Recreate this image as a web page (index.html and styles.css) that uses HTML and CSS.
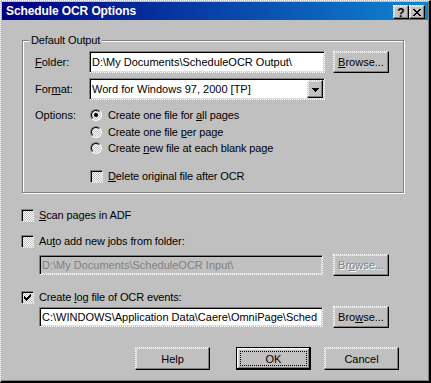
FILE: index.html
```html
<!DOCTYPE html>
<html>
<head>
<meta charset="utf-8">
<link rel="stylesheet" href="styles.css">
</head>
<body>
<div class="window">
  <div class="titlebar">
    <span class="title">Schedule OCR Options</span>
    <div class="tbtns">
      <div class="tbtn help">?</div>
      <div class="tbtn close">
        <svg width="8" height="7" viewBox="0 0 8 7" shape-rendering="crispEdges"><path fill="#000" d="M0 0h2v1h-2z M6 0h2v1h-2z M1 1h2v1h-2z M5 1h2v1h-2z M2 2h4v1h-4z M3 3h2v1h-2z M2 4h4v1h-4z M1 5h2v1h-2z M5 5h2v1h-2z M0 6h2v1h-2z M6 6h2v1h-2z"/></svg>
      </div>
    </div>
  </div>
  <div class="content">
    <div class="group">
      <span class="legend">Default Output</span>
      <div class="row">
        <span class="lbl"><u>F</u>older:</span>
        <div class="field wide">D:\My Documents\ScheduleOCR Output\</div>
        <div class="btn browse"><span><u>B</u>rowse...</span></div>
      </div>
      <div class="row row-gap">
        <span class="lbl">For<u>m</u>at:</span>
        <div class="field wide select">
          <span class="sel-text">Word for Windows 97, 2000 [TP]</span>
          <div class="arrow">
            <svg width="7" height="4" viewBox="0 0 7 4" shape-rendering="crispEdges"><path fill="#000" d="M0 0h7v1h-7z M1 1h5v1h-5z M2 2h3v1h-3z M3 3h1v1h-1z"/></svg>
          </div>
        </div>
      </div>
      <div class="options">
        <span class="lbl opt-lbl">Options:</span>
        <div class="radios">
          <div class="radio-row"><span class="radio"><span class="radio-in"><span class="dot"></span></span></span><span class="txt">Create one file for <u>a</u>ll pages</span></div>
          <div class="radio-row mid"><span class="radio"><span class="radio-in"></span></span><span class="txt">Create one file <u>p</u>er page</span></div>
          <div class="radio-row"><span class="radio"><span class="radio-in"></span></span><span class="txt">Create <u>n</u>ew file at each blank page</span></div>
        </div>
      </div>
      <div class="check-row indent">
        <span class="checkbox"></span><span class="txt"><u>D</u>elete original file after OCR</span>
      </div>
    </div>

    <div class="check-row scan">
      <span class="checkbox"></span><span class="txt"><u>S</u>can pages in ADF</span>
    </div>
    <div class="check-row auto">
      <span class="checkbox"></span><span class="txt">Au<u>t</u>o add new jobs from folder:</span>
    </div>
    <div class="path-row first">
      <div class="field path disabled">D:\My Documents\ScheduleOCR Input\</div>
      <div class="btn browse path-browse disabled"><span>Br<u>o</u>wse...</span></div>
    </div>
    <div class="check-row log">
      <span class="checkbox">
        <svg width="7" height="7" viewBox="0 0 7 7" shape-rendering="crispEdges"><path fill="#000" d="M6 0h1v1h-1z M5 1h2v1h-2z M0 2h1v1h-1z M4 2h3v1h-3z M0 3h2v1h-2z M3 3h3v1h-3z M0 4h5v1h-5z M1 5h3v1h-3z M2 6h1v1h-1z"/></svg>
      </span><span class="txt">Create <u>l</u>og file of OCR events:</span>
    </div>
    <div class="path-row second">
      <div class="field path">C:\WINDOWS\Application Data\Caere\OmniPage\Sched</div>
      <div class="btn browse path-browse"><span>Bro<u>w</u>se...</span></div>
    </div>

    <div class="actions">
      <div class="btn action">Help</div>
      <div class="btn action default"><span>OK</span></div>
      <div class="btn action cancel">Cancel</div>
    </div>
  </div>
</div>
</body>
</html>
```

FILE: styles.css
```css
html, body {
  margin: 0;
  padding: 0;
  background: #c0c0c0;
}

body {
  font-family: "Liberation Sans", Arial, sans-serif;
  font-size: 11px;
  color: #000;
}

u {
  text-decoration: underline;
  text-underline-offset: 1px;
}

.txt {
  letter-spacing: -0.12px;
}

.window {
  width: 431px;
  height: 383px;
  box-sizing: border-box;
  background: #c0c0c0;
  border-top: 1px dotted #fff;
  border-left: 1px dotted #fff;
  border-right: 2px solid #000;
  border-bottom: 2px solid #000;
  box-shadow: inset -1px -1px #808080;
  padding: 1px;
  display: flex;
  flex-direction: column;
}

/* Title bar */
.titlebar {
  height: 18px;
  display: flex;
  align-items: flex-start;
  background: linear-gradient(to right, #000080, #1084d0);
}

.title {
  flex: 1;
  color: #fff;
  font-weight: bold;
  font-size: 12px;
  line-height: 17px;
  padding: 1px 0 0 4px;
  letter-spacing: -0.1px;
  white-space: nowrap;
}

.tbtns {
  display: flex;
  padding: 3px 3px 0 0;
}

.tbtn {
  width: 16px;
  height: 14px;
  box-sizing: border-box;
  background: #c0c0c0;
  border-top: 1px dotted #fff;
  border-left: 1px dotted #fff;
  border-right: 1px solid #000;
  border-bottom: 1px solid #000;
  box-shadow: inset -1px -1px #808080, inset 1px 1px #dfdfdf;
  display: flex;
  align-items: center;
  justify-content: center;
}

.tbtn.help {
  font-weight: bold;
  font-size: 12px;
  line-height: 12px;
  padding-top: 1px;
}

.tbtn svg {
  display: block;
}

/* Content */
.content {
  padding: 20px 0 0 19px;
  display: flex;
  flex-direction: column;
}

.group {
  position: relative;
  margin-left: 1px;
  width: 382px;
  box-sizing: border-box;
  border: 1px solid #808080;
  box-shadow: inset 1px 1px #fff, 1px 1px #fff;
  padding: 10px 0 8px 12px;
}

.legend {
  position: absolute;
  top: -7px;
  left: 6px;
  padding: 0 2px;
  line-height: 13px;
  background: #c0c0c0;
  white-space: nowrap;
  letter-spacing: -0.12px;
}

.row {
  display: flex;
  align-items: center;
  height: 22px;
}

.row-gap {
  margin-top: 5px;
}

.lbl {
  width: 54px;
  flex: none;
  white-space: nowrap;
}

.field {
  height: 22px;
  box-sizing: border-box;
  background: #fff;
  background-clip: padding-box;
  border-top: 1px solid #808080;
  border-left: 1px solid #808080;
  border-right: 1px dotted #fff;
  border-bottom: 1px dotted #fff;
  box-shadow: inset 1px 1px #000, inset -1px -1px #dfdfdf;
  padding-left: 2px;
  line-height: 20px;
  white-space: nowrap;
  overflow: hidden;
  flex: none;
}

.field.wide {
  width: 236px;
}

.field.select {
  display: flex;
  align-items: center;
  justify-content: space-between;
  padding-right: 1px;
}

.sel-text {
  white-space: nowrap;
}

.arrow {
  width: 16px;
  height: 18px;
  box-sizing: border-box;
  background: #c0c0c0;
  border-top: 1px dotted #fff;
  border-left: 1px dotted #fff;
  border-right: 1px solid #000;
  border-bottom: 1px solid #000;
  box-shadow: inset -1px -1px #808080, inset 1px 1px #dfdfdf;
  display: flex;
  align-items: center;
  justify-content: center;
  flex: none;
}

.arrow svg {
  display: block;
  margin-top: 1px;
}

.btn {
  position: relative;
  box-sizing: border-box;
  background: #c0c0c0;
  border-top: 1px dotted #fff;
  border-left: 1px dotted #fff;
  border-right: 1px solid #000;
  border-bottom: 1px solid #000;
  box-shadow: inset -1px -1px #808080, inset 1px 1px #dfdfdf;
  display: flex;
  align-items: center;
  justify-content: center;
  white-space: nowrap;
  flex: none;
}

.browse {
  width: 56px;
  height: 22px;
  margin-left: 8px;
}

.btn.disabled {
  color: #808080;
  text-shadow: 1px 1px #fff;
}

/* Options */
.options {
  display: flex;
  margin-top: 7px;
}

.opt-lbl {
  width: 55px;
  height: 16px;
  line-height: 16px;
}

.radios {
  display: flex;
  flex-direction: column;
}

.radio-row {
  display: flex;
  align-items: center;
  height: 16px;
  white-space: nowrap;
}

.radio-row.mid {
  height: 17px;
}

.radio {
  width: 12px;
  height: 12px;
  box-sizing: border-box;
  border-radius: 50%;
  border: 1px solid;
  border-color: #808080 #fff #fff #808080;
  margin-right: 6px;
  flex: none;
  display: flex;
}

.radio-in {
  flex: 1;
  border-radius: 50%;
  border: 1px solid;
  border-color: #000 #dfdfdf #dfdfdf #000;
  background: repeating-conic-gradient(#fff 0 25%, #c0c0c0 0 50%) 0 0 / 2px 2px;
  display: flex;
  align-items: center;
  justify-content: center;
}

.dot {
  width: 4px;
  height: 4px;
  border-radius: 50%;
  background: #000;
}

/* Checkboxes */
.check-row {
  display: flex;
  align-items: center;
  height: 16px;
  white-space: nowrap;
}

.check-row.indent {
  margin-top: 12px;
  margin-left: 55px;
}

.check-row.scan {
  margin-top: 14px;
}

.check-row.auto {
  margin-top: 10px;
}

.check-row.log {
  margin-top: 13px;
}

.checkbox {
  width: 13px;
  height: 13px;
  box-sizing: border-box;
  background: repeating-conic-gradient(#fff 0 25%, #c0c0c0 0 50%) 0 0 / 2px 2px;
  background-clip: padding-box;
  border-top: 1px solid #808080;
  border-left: 1px solid #808080;
  border-right: 1px dotted #fff;
  border-bottom: 1px dotted #fff;
  box-shadow: inset 1px 1px #000, inset -1px -1px #dfdfdf;
  margin-right: 5px;
  flex: none;
  display: flex;
  align-items: center;
  justify-content: center;
}

.checkbox svg {
  display: block;
}

/* Path rows */
.path-row {
  display: flex;
  align-items: center;
  height: 22px;
  margin-left: 18px;
}

.path-row.first {
  margin-top: 5px;
}

.path-row.second {
  margin-top: 1px;
}

.field.path {
  width: 284px;
  height: 20px;
  line-height: 18px;
}

.field.disabled {
  background: #c0c0c0;
  color: #808080;
}

.path-browse {
  margin-left: 10px;
}

/* Actions */
.actions {
  display: flex;
  margin-top: 19px;
  padding-left: 114px;
}

.action {
  width: 75px;
  height: 23px;
}

.action.default {
  margin-left: 26px;
  border: 1px solid #000;
  box-shadow: inset -1px -1px #000, inset 1px 1px #fff, inset -2px -2px #808080, inset 2px 2px #dfdfdf;
}

.action.default::after {
  content: "";
  position: absolute;
  left: 3px;
  right: 3px;
  top: 3px;
  bottom: 3px;
  border: 1px dotted #000;
}

.action.cancel {
  margin-left: 13px;
}
```
